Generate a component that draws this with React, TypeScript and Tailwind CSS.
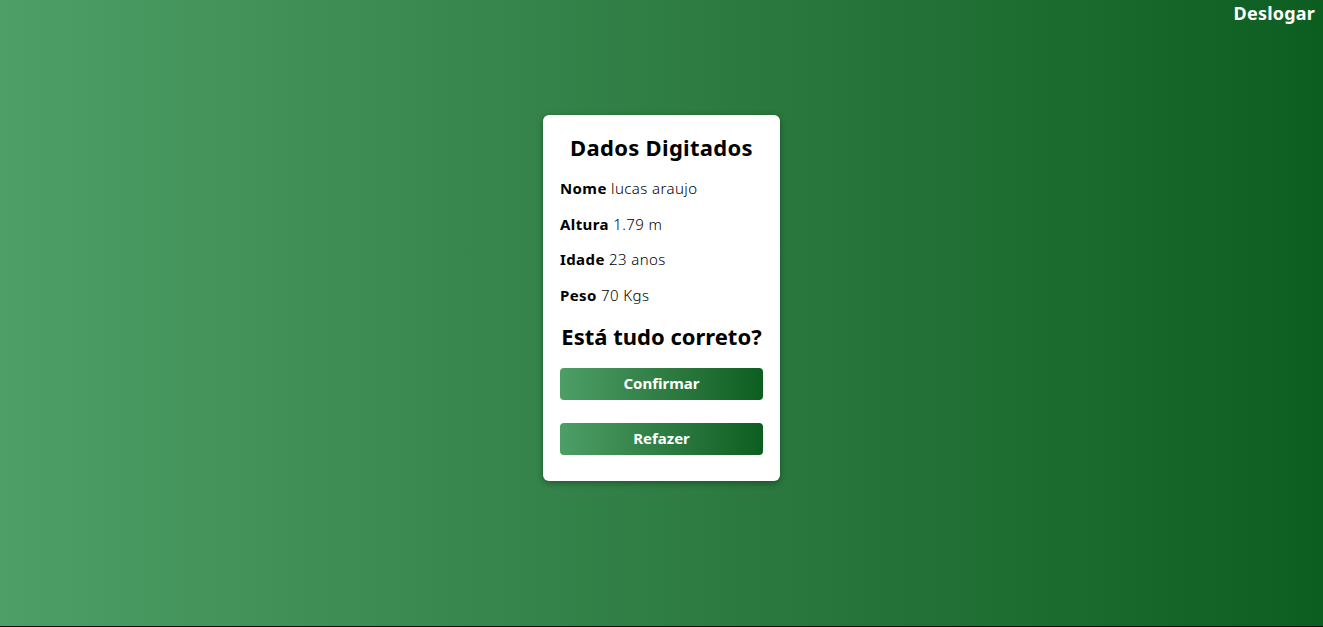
import React from "react";

const font = { fontFamily: '"Noto Sans", "Open Sans", sans-serif' };

function Row({ label, value }: { label: string; value: string }) {
  return (
    <p className="text-[15px] tracking-[0.4px] text-black leading-[20px]">
      <span className="font-bold">{label}</span>{" "}
      <span className="font-light">{value}</span>
    </p>
  );
}

export default function App() {
  const dados = [
    { label: "Nome", value: "lucas araujo" },
    { label: "Altura", value: "1.79 m" },
    { label: "Idade", value: "23 anos" },
    { label: "Peso", value: "70 Kgs" },
  ];
  return (
    <div
      className="w-full h-[627px] flex flex-col bg-gradient-to-r from-[#4d9e67] to-[#0c5e20] border-b border-[#111]"
      style={font}
    >
      <div className="h-[26px] flex justify-end items-center pr-[8px]">
        <button className="text-white font-bold text-[18px] tracking-[0.2px]">Deslogar</button>
      </div>
      <div className="flex justify-center pt-[89px]">
        <div className="w-[237px] bg-white rounded-[6px] shadow-[0_2px_6px_rgba(0,0,0,0.35)] px-[17px] pt-[18px] pb-[26px] flex flex-col">
          <h1 className="text-center text-[22px] tracking-[0.3px] font-bold text-black leading-[28px] mb-[17px]">
            Dados Digitados
          </h1>
          <div className="flex flex-col gap-[15.5px]">
            {dados.map((d) => (
              <Row key={d.label} label={d.label} value={d.value} />
            ))}
          </div>
          <h2 className="text-[22px] whitespace-nowrap font-bold text-black leading-[28px] mt-[17px] text-center">
            Está tudo correto?
          </h2>
          <button className="mt-[18px] h-[32px] w-full rounded-[4px] bg-gradient-to-r from-[#4d9e67] to-[#0c5e20] text-white font-bold text-[15px]">
            Confirmar
          </button>
          <button className="mt-[23px] h-[32px] w-full rounded-[4px] bg-gradient-to-r from-[#4d9e67] to-[#0c5e20] text-white font-bold text-[15px]">
            Refazer
          </button>
        </div>
      </div>
    </div>
  );
}
